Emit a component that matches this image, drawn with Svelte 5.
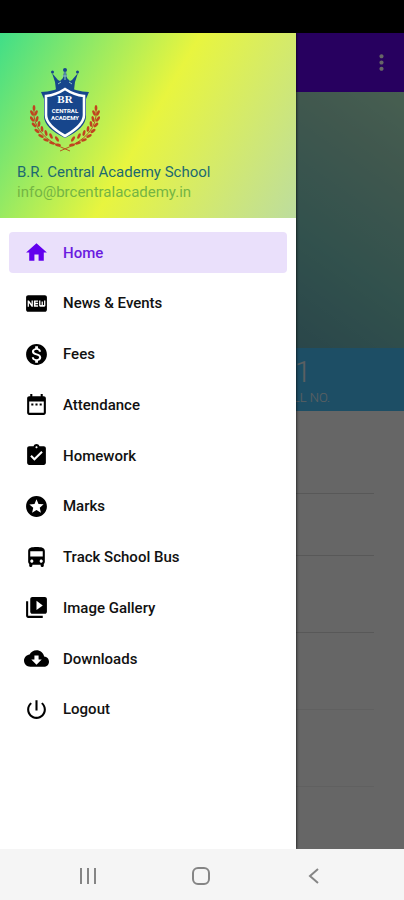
<script>
  const items = [
    { label: 'Home', icon: 'M10 20v-6h4v6h5v-8h3L12 3 2 12h3v8z' },
    { label: 'News & Events', icon: 'M20 4H4c-1.11 0-1.99.89-1.99 2L2 18c0 1.11.89 2 2 2h16c1.11 0 2-.89 2-2V6c0-1.11-.89-2-2-2zM8.5 15H7.3l-2.55-3.5V15H3.5V9h1.25l2.5 3.5V9H8.5v6zm5-4.74H11v1.12h2.5v1.26H11v1.11h2.5V15h-4V9h4v1.26zM20.5 14c0 .55-.45 1-1 1h-4c-.55 0-1-.45-1-1V9h1.25v4.51h1.13V9.99h1.25v3.51h1.12V9h1.25v5z' },
    { label: 'Fees', icon: 'M12 2C6.48 2 2 6.48 2 12s4.48 10 10 10 10-4.48 10-10S17.52 2 12 2zm1.41 16.09V20h-2.67v-1.93c-1.71-.36-3.16-1.46-3.27-3.4h1.96c.1 1.05.82 1.87 2.65 1.87 1.96 0 2.4-.98 2.4-1.59 0-.83-.44-1.61-2.67-2.14-2.48-.6-4.18-1.62-4.18-3.67 0-1.72 1.39-2.84 3.11-3.21V4h2.67v1.95c1.86.45 2.79 1.86 2.85 3.39H14.3c-.05-1.11-.64-1.87-2.22-1.87-1.5 0-2.4.68-2.4 1.64 0 .84.65 1.39 2.67 1.91s4.18 1.39 4.18 3.91c-.01 1.83-1.38 2.83-3.12 3.16z' },
    { label: 'Attendance', icon: 'M9 11H7v2h2v-2zm4 0h-2v2h2v-2zm4 0h-2v2h2v-2zm2-7h-1V2h-2v2H8V2H6v2H5c-1.11 0-1.99.9-1.99 2L3 20c0 1.1.89 2 2 2h14c1.1 0 2-.9 2-2V6c0-1.1-.9-2-2-2zm0 16H5V9h14v11z' },
    { label: 'Homework', icon: 'M19 3h-4.18C14.4 1.84 13.3 1 12 1c-1.3 0-2.4.84-2.82 2H5c-1.1 0-2 .9-2 2v14c0 1.1.9 2 2 2h14c1.1 0 2-.9 2-2V5c0-1.1-.9-2-2-2zm-7 0c.55 0 1 .45 1 1s-.45 1-1 1-1-.45-1-1 .45-1 1-1zm-2 14l-4-4 1.41-1.41L10 14.17l6.59-6.59L18 9l-8 8z' },
    { label: 'Marks', icon: 'M11.99 2C6.47 2 2 6.48 2 12s4.47 10 9.99 10C17.52 22 22 17.52 22 12S17.52 2 11.99 2zm4.24 16L12 15.45 7.77 18l1.12-4.81-3.73-3.23 4.92-.42L12 5l1.92 4.53 4.92.42-3.73 3.23L16.23 18z' },
    { label: 'Track School Bus', icon: 'M4 16c0 .88.39 1.67 1 2.22V20c0 .55.45 1 1 1h1c.55 0 1-.45 1-1v-1h8v1c0 .55.45 1 1 1h1c.55 0 1-.45 1-1v-1.78c.61-.55 1-1.34 1-2.22V6c0-3.5-3.58-4-8-4s-8 .5-8 4v10zm3.5 1c-.83 0-1.5-.67-1.5-1.5S6.67 14 7.5 14s1.5.67 1.5 1.5S8.33 17 7.5 17zm9 0c-.83 0-1.5-.67-1.5-1.5s.67-1.5 1.5-1.5 1.5.67 1.5 1.5-.67 1.5-1.5 1.5zm1.5-6H6V6h12v5z' },
    { label: 'Image Gallery', icon: 'M4 6H2v14c0 1.1.9 2 2 2h14v-2H4V6zm16-4H8c-1.1 0-2 .9-2 2v12c0 1.1.9 2 2 2h12c1.1 0 2-.9 2-2V4c0-1.1-.9-2-2-2zm-8 12.5v-9l6 4.5-6 4.5z' },
    { label: 'Downloads', icon: 'M19.35 10.04C18.67 6.59 15.64 4 12 4 9.11 4 6.6 5.64 5.35 8.04 2.34 8.36 0 10.91 0 14c0 3.31 2.69 6 6 6h13c2.76 0 5-2.24 5-5 0-2.64-2.05-4.78-4.65-4.96zM17 13l-5 5-5-5h3V9h4v4h3z' },
    { label: 'Logout', icon: 'M13 3h-2v10h2V3zm4.83 2.17l-1.42 1.42C17.99 7.86 19 9.81 19 12c0 3.87-3.13 7-7 7s-7-3.13-7-7c0-2.19 1.01-4.14 2.58-5.42L6.17 5.17C4.23 6.82 3 9.26 3 12c0 4.97 4.03 9 9 9s9-4.03 9-9c0-2.74-1.23-5.18-3.17-6.83z' }
  ];
  const rows = ['first', 'short', '', 'faint', 'faint'];
  // leaves of the laurel on the school crest, left branch: x, y, angle
  const leaves = [
    [4, 41, 0], [2, 46, -25], [6, 46, 25], [2, 52, -35], [7, 52, 15],
    [4, 58, -45], [9, 57, 5], [7, 64, -55], [12, 62, -5], [11, 69, -65],
    [16, 66, -15], [16, 73, -70], [21, 69, -25], [22, 76, -75], [27, 72, -35],
    [28, 78, -80]
  ];
  let active = $state('Home');
</script>

<div class="phone">
  <div class="status"></div>

  <div class="screen">
    <header class="appbar">
      <button class="more" aria-label="More options">
        <svg viewBox="0 0 24 24"><path d="M12 8c1.1 0 2-.9 2-2s-.9-2-2-2-2 .9-2 2 .9 2 2 2zm0 2c-1.1 0-2 .9-2 2s.9 2 2 2 2-.9 2-2-.9-2-2-2zm0 6c-1.1 0-2 .9-2 2s.9 2 2 2 2-.9 2-2-.9-2-2-2z" /></svg>
      </button>
    </header>
    <div class="banner"></div>
    <div class="stats">
      <div class="stat">
        <strong>1</strong>
        <span>ROLL NO.</span>
      </div>
    </div>
    <ul class="details">
      {#each rows as row}
        <li class={row}></li>
      {/each}
    </ul>

    <div class="scrim"></div>

    <aside class="drawer">
      <div class="profile">
        <svg class="crest" viewBox="0 0 70 86" aria-label="School crest">
          <g fill="#17468c">
            <path d="M26 23l-1-8-3-9 6 7 2 1 3-3 1-6h2l1 6 3 3 2-1 6-7-3 9-1 8q-9-5-18 0z" />
            <circle cx="35" cy="3" r="2" />
            <circle cx="22.5" cy="5" r="1.5" />
            <circle cx="47.5" cy="5" r="1.5" />
            <path d="M11 25q13 0 24-7 11 7 24 7l-3 7v17q0 12-21 22-21-10-21-22V32z" />
          </g>
          <path d="M35 22q9 6 19 7v19q0 10-19 21-19-11-19-21V29Q26 28 35 22z" fill="#17468c" stroke="#fff" stroke-width="2.6" />
          <path d="M28 17l3-2M42 17l-3-2M35 5v8M32 9h6" stroke="#8fc5c0" stroke-width="1" />
          <g fill="#fff" text-anchor="middle">
            <text x="35" y="36" class="mono">BR</text>
            <text x="35" y="46" class="name">CENTRAL</text>
            <text x="35" y="53" class="name">ACADEMY</text>
          </g>
          {#each [1, -1] as side}
            <g transform={side === 1 ? '' : 'translate(70 0) scale(-1 1)'}>
              <path d="M4 42q-3 27 36 42" fill="none" stroke="#b5551f" />
              {#each leaves as [x, y, angle]}
                <ellipse cx={x} cy={y} rx="1.4" ry="3" fill="#c0441f" transform="rotate({angle} {x} {y})" />
              {/each}
            </g>
          {/each}
        </svg>
        <div class="school">B.R. Central Academy School</div>
        <div class="email">info@brcentralacademy.in</div>
      </div>

      <nav>
        {#each items as item}
          <button class="item" class:active={active === item.label} onclick={() => (active = item.label)}>
            <svg viewBox="0 0 24 24"><path fill-rule="evenodd" d={item.icon} /></svg>
            <span>{item.label}</span>
          </button>
        {/each}
      </nav>
    </aside>
  </div>

  <footer class="sysbar">
    <button aria-label="Recent apps">
      <svg viewBox="0 0 20 20"><path d="M3 2v16M10 2v16M17 2v16" /></svg>
    </button>
    <button aria-label="Home screen">
      <svg viewBox="0 0 20 20"><rect x="2" y="2" width="16" height="16" rx="5" /></svg>
    </button>
    <button aria-label="Back">
      <svg viewBox="0 0 20 20"><path d="M14 3l-8 7 8 7" /></svg>
    </button>
  </footer>
</div>

<style>
  :global(body) {
    margin: 0;
    font-family: Roboto, sans-serif;
  }
  button {
    border: 0;
    padding: 0;
    background: none;
    font: inherit;
    cursor: pointer;
  }
  svg {
    display: block;
  }
  .phone {
    display: flex;
    flex-direction: column;
    min-height: 100vh;
  }
  .status {
    height: 33px;
    background: #000;
  }
  .screen {
    position: relative;
    flex: 1;
    overflow: hidden;
    background: #fff;
  }
  .appbar {
    display: flex;
    align-items: center;
    justify-content: flex-end;
    height: 59px;
    padding-right: 10px;
    background: #6200ee;
  }
  .more svg {
    width: 25px;
    height: 25px;
    fill: #fff;
  }
  .banner {
    height: 256px;
    background: linear-gradient(215deg, #b2eeca 0%, #a2dcc4 14%, #7ccac0 40%, #69afb9 62%, #5c9cac 100%);
  }
  .stats {
    display: grid;
    grid-template-columns: 1fr 1fr;
    height: 63px;
    background: #4ac4fc;
  }
  .stat {
    grid-column: 2;
    display: flex;
    flex-direction: column;
    align-items: center;
    justify-content: flex-end;
    padding-bottom: 3px;
    color: #e4eef4;
  }
  .stat strong {
    font-size: 30px;
    line-height: 32px;
    font-weight: 300;
  }
  .stat span {
    font-size: 13px;
    line-height: 20px;
    font-weight: 300;
  }
  .details {
    list-style: none;
    margin: 0;
    padding: 0 30px;
  }
  .details li {
    height: 76px;
    border-bottom: 1px solid #dcdcdc;
  }
  .details .first {
    padding-top: 6px;
  }
  .details .short {
    height: 61px;
  }
  .details .faint {
    border-color: #efefef;
  }
  .scrim {
    position: absolute;
    inset: 0;
    background: rgba(0, 0, 0, 0.6);
  }
  .drawer {
    position: absolute;
    top: 0;
    bottom: 0;
    left: 0;
    width: 296px;
    background: #fff;
    box-shadow: 0 0 3px #000;
  }
  .profile {
    padding: 34px 17px 15px;
    background: linear-gradient(120deg, #40de88 0%, #e8f53f 50%, #bddd9e 100%);
  }
  .crest {
    width: 70px;
    height: 86px;
    margin: 0 0 9px 13px;
  }
  .crest text {
    font-weight: 700;
  }
  .crest .mono {
    font-family: "Liberation Serif", serif;
    font-size: 11px;
  }
  .crest .name {
    font-size: 6px;
  }
  .school {
    font-size: 15px;
    line-height: 20px;
    color: #1d6a70;
  }
  .email {
    font-size: 15px;
    line-height: 21px;
    color: #74b544;
  }
  nav {
    display: flex;
    flex-direction: column;
    justify-content: space-between;
    min-height: 498px;
    padding: 14px 9px;
  }
  .item {
    display: flex;
    align-items: center;
    gap: 14px;
    height: 41px;
    padding-left: 15px;
    border-radius: 4px;
    font-size: 15px;
    font-weight: 500;
    color: #111;
  }
  .item svg {
    width: 25px;
    height: 25px;
    fill: #000;
  }
  .active {
    background: #eae0fb;
    color: #6a1be0;
  }
  .active svg {
    fill: #6200ee;
  }
  .sysbar {
    display: flex;
    align-items: center;
    justify-content: space-around;
    height: 48px;
    padding: 3px 33px 0 31px;
    background: #f5f5f5;
  }
  .sysbar svg {
    width: 20px;
    height: 20px;
    fill: none;
    stroke: #858585;
    stroke-width: 2;
  }
</style>
